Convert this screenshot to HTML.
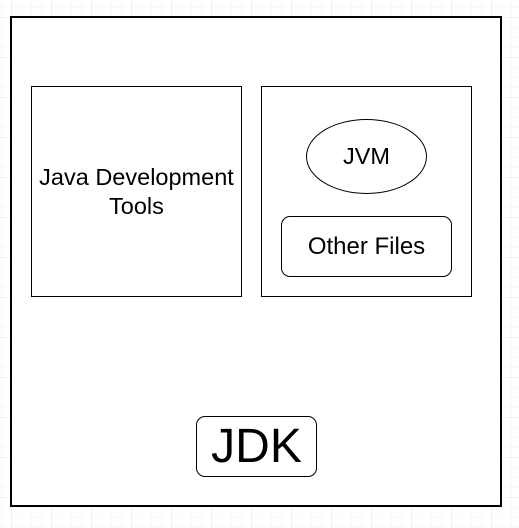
<!DOCTYPE html>
<html><head><style>
body{margin:0;width:519px;height:528px;overflow:hidden;background:#fff;
background-image:linear-gradient(#f0f0f0 1px,transparent 1px),linear-gradient(90deg,#f0f0f0 1px,transparent 1px),linear-gradient(#f9f9f9 1px,transparent 1px),linear-gradient(90deg,#f9f9f9 1px,transparent 1px);
background-size:40px 40px,40px 40px,10px 10px,10px 10px;background-position:11px 17px,11px 17px,11px 17px,11px 17px;
font-family:"Liberation Sans",sans-serif;position:relative}
div{position:absolute;box-sizing:border-box;border:1px solid #000;background:#fff;display:flex;align-items:center;justify-content:center;text-align:center;color:#000}
</style></head><body>
<div style="left:10px;top:16px;width:492px;height:491px;border-width:2px"></div>
<div style="left:31px;top:86px;width:211px;height:211px;font-size:23.5px;line-height:29px">Java Development<br>Tools</div>
<div style="left:261px;top:86px;width:211px;height:211px"></div>
<div style="left:306px;top:119px;width:121px;height:75px;border-radius:50%;font-size:23.5px">JVM</div>
<div style="left:281px;top:216px;width:171px;height:61px;border-radius:9px;font-size:24px">Other Files</div>
<div style="left:196px;top:416px;width:121px;height:61px;border-radius:9px;font-size:48px">JDK</div>
</body></html>
